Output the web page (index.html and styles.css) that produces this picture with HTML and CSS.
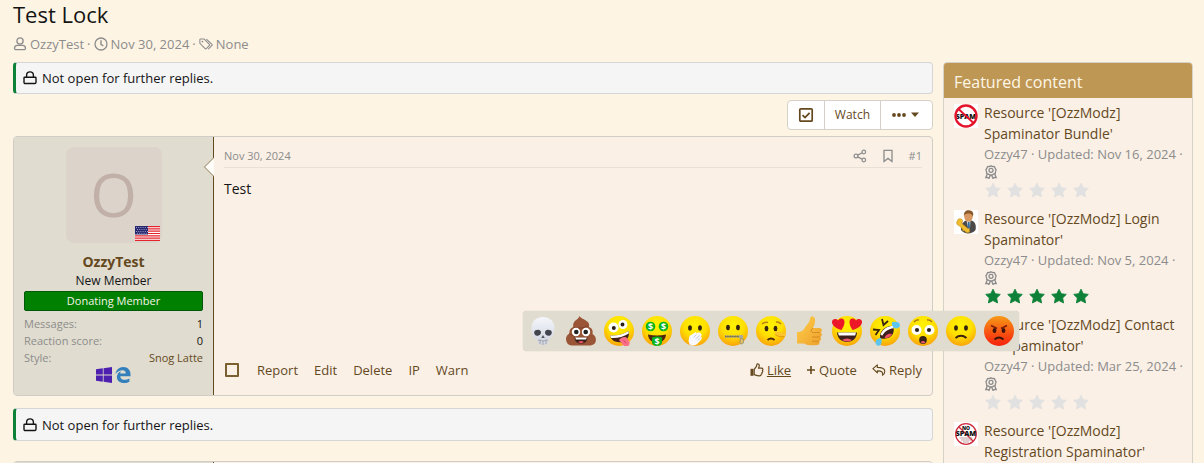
FILE: index.html
```
<!DOCTYPE html>
<html lang="en">
<head>
<meta charset="utf-8">
<meta name="viewport" content="width=device-width, initial-scale=1">
<title>Test Lock</title>
<link rel="stylesheet" href="styles.css">
</head>
<body>
<svg class="defs" aria-hidden="true">
  <defs>
    <radialGradient id="yellow" cx="50%" cy="30%" r="75%"><stop offset="0" stop-color="#fff200"/><stop offset=".5" stop-color="#ffe000"/><stop offset="1" stop-color="#f99a0c"/></radialGradient>
    <linearGradient id="red" x1="0" y1="0" x2="0" y2="1"><stop offset="0" stop-color="#f79a16"/><stop offset=".5" stop-color="#f85a12"/><stop offset="1" stop-color="#f5200c"/></linearGradient>
    <linearGradient id="thumb" x1="0" y1="0" x2="1" y2="1"><stop offset="0" stop-color="#ffcf4a"/><stop offset="1" stop-color="#eda02c"/></linearGradient>
    <linearGradient id="bone" x1="0" y1="0" x2="0" y2="1"><stop offset="0" stop-color="#f4f6fb"/><stop offset="1" stop-color="#cfd3dd"/></linearGradient>
    <symbol id="i-lock" viewBox="0 0 14 14"><path d="M1.7 6.2h10.6q.7 0 .7.7v4.4q0 1.2-1.2 1.2H2.2q-1.2 0-1.2-1.2V6.9q0-.7.7-.7zM3.6 6V4.3a3.4 3.4 0 0 1 6.8 0V6" fill="none" stroke="currentColor" stroke-width="1.4"/></symbol>
    <symbol id="i-user" viewBox="0 0 14 14"><circle cx="7" cy="4" r="3.1" fill="none" stroke="currentColor" stroke-width="1.3"/><path d="M4.5 8.4h5c2 0 3 1.4 3 3.1 0 .7-.4 1.1-1 1.1h-9c-.6 0-1-.4-1-1.1 0-1.700 1-3.100 3-3.100z" fill="none" stroke="currentColor" stroke-width="1.300"/></symbol>
    <symbol id="i-clock" viewBox="0 0 14 14"><circle cx="7" cy="7" r="6" fill="none" stroke="currentColor" stroke-width="1.300"/><path d="M7 3.300V7.300l2.300 1.500" fill="none" stroke="currentColor" stroke-width="1.400"/></symbol>
    <symbol id="i-tags" viewBox="0 0 16 14"><path d="M1 1.800v4.400l6 6q.7.7 1.400 0l3.500-3.500q.7-.7 0-1.400l-6-6H1.800q-.8 0-.8.5z" fill="none" stroke="currentColor" stroke-width="1.200"/><circle cx="3.900" cy="4.200" r="1" fill="currentColor"/><path d="M8.500 1.300l6.300 6.200q.6.6 0 1.200l-4.200 4.200" fill="none" stroke="currentColor" stroke-width="1.200"/></symbol>
    <symbol id="i-share" viewBox="0 0 14 14"><g fill="none" stroke="currentColor" stroke-width="1.200"><circle cx="10.800" cy="3" r="1.800"/><circle cx="3" cy="7" r="1.900"/><circle cx="10.800" cy="11" r="1.800"/><path d="M4.700 6.100l4.500-2.300M4.700 7.900l4.500 2.300"/></g></symbol>
    <symbol id="i-bookmark" viewBox="0 0 14 14"><path d="M3 1.300h8v11.200L7 9.400l-4 3.100z" fill="none" stroke="currentColor" stroke-width="1.300"/></symbol>
    <symbol id="i-check" viewBox="0 0 16 16"><rect x="1.800" y="1.800" width="12.400" height="12.400" rx="1" fill="none" stroke="currentColor" stroke-width="1.700"/><path d="M4.500 8.200l2.500 2.400 4.600-4.800" fill="none" stroke="currentColor" stroke-width="1.800"/></symbol>
    <symbol id="i-more" viewBox="0 0 28 14"><g fill="currentColor"><circle cx="3" cy="7" r="1.900"/><circle cx="8" cy="7" r="1.900"/><circle cx="13" cy="7" r="1.900"/><path d="M20 4.500h8L24 9z"/></g></symbol>
    <symbol id="i-like" viewBox="0 0 14 14"><path d="M4.200 6.300L6.400 3.400l.6-2.300c.2-.6 2.300-.3 2.300 1.500 0 1-.6 1.700-.7 2.600h3c1.500 0 1.600 1.700.8 2.300.6.800.3 1.700-.4 2 .3.900-.1 1.500-.7 1.700 0 1-.8 1.600-2 1.600-2.100 0-3.400-.6-5.100-1.200z" fill="none" stroke="currentColor" stroke-width="1.200"/><path d="M.5 5.800h3v7h-3z" fill="currentColor"/></symbol>
    <symbol id="i-plus" viewBox="0 0 10 14"><path d="M5 3v8M1 7h8" stroke="currentColor" stroke-width="1.600"/></symbol>
    <symbol id="i-reply" viewBox="0 0 15 14"><path d="M1 5.500l4.700-4v2.700c4.500 0 8 .8 8 4.300 0 1.700-1 3.200-2.500 4 .9-3-.5-4.500-5.500-4.600v2.200z" fill="none" stroke="currentColor" stroke-width="1.200" stroke-linejoin="round"/></symbol>
    <symbol id="i-award" viewBox="0 0 14 14"><g fill="none" stroke="currentColor"><path d="M7 .8l1.700.7 1.800.2.700 1.700.9 1.500-.6 1.700-.2 1.800-1.700.7L8 10H6l-1.600-.9-1.700-.7-.2-1.800-.6-1.700.9-1.500.7-1.700 1.800-.2z" stroke-width="1.300"/><circle cx="7" cy="5.300" r="2" stroke-width="1.300"/><path d="M3.300 8.800L1.800 12.600l2-.1 1.200 1L6.400 10M10.700 8.800l1.500 3.800-2-.1-1.200 1L7.600 10" stroke-width="1.300"/></g></symbol>
    <symbol id="i-star" viewBox="0 0 18 17"><path d="M9 .8l2.500 5.100 5.700.8-4.100 4 1 5.600L9 13.600l-5.100 2.700 1-5.600-4.100-4 5.700-.8z" fill="currentColor" stroke="currentColor" stroke-width="1" stroke-linejoin="round"/></symbol>
    <symbol id="stars" viewBox="0 0 106 17"><use href="#i-star" x="1" y="1" width="16" height="16"/><use href="#i-star" x="23" y="1" width="16" height="16"/><use href="#i-star" x="45" y="1" width="16" height="16"/><use href="#i-star" x="67" y="1" width="16" height="16"/><use href="#i-star" x="89" y="1" width="16" height="16"/></symbol>
  </defs>
</svg>

<div class="page">
  <header class="page-head">
    <h1 class="title">Test Lock</h1>
    <div class="byline">
      <svg class="icon"><use href="#i-user"/></svg><a href="#user">OzzyTest</a><span class="dot">·</span>
      <svg class="icon"><use href="#i-clock"/></svg><a href="#date">Nov 30, 2024</a><span class="dot">·</span>
      <svg class="icon"><use href="#i-tags"/></svg><span>None</span>
    </div>
  </header>

  <div class="columns">
    <main class="content">
      <div class="notice"><svg class="icon"><use href="#i-lock"/></svg>Not open for further replies.</div>

      <div class="toolbar">
        <div class="button-group">
          <button type="button" aria-label="Select for moderation"><svg class="icon icon-check"><use href="#i-check"/></svg></button>
          <button type="button">Watch</button>
          <button type="button" aria-label="More options"><svg class="icon icon-more"><use href="#i-more"/></svg></button>
        </div>
      </div>

      <article class="post">
        <section class="post-user">
          <div class="avatar">O
            <svg class="flag" viewBox="0 0 25 15" role="img" aria-label="United States">
              <rect width="25" height="15" fill="#fff"/>
              <path d="M0 .6h25M0 2.900h25M0 5.200h25M0 7.500h25M0 9.800h25M0 12.100h25M0 14.400h25" stroke="#e3242c" stroke-width="1.200"/>
              <rect width="13" height="8.500" fill="#27276f"/>
              <path d="M1 1.500h12M2 3.500h11M1 5.500h12M2 7.300h11" stroke="#b9b9dc" stroke-width=".8" stroke-dasharray="1 1.200"/>
            </svg>
          </div>
          <h2 class="user-name"><a href="#user">OzzyTest</a></h2>
          <p class="user-title">New Member</p>
          <p class="banner">Donating Member</p>
          <dl class="stats">
            <div><dt>Messages:</dt><dd>1</dd></div>
            <div><dt>Reaction score:</dt><dd>0</dd></div>
            <div><dt>Style:</dt><dd><a href="#style">Snog Latte</a></dd></div>
          </dl>
          <div class="platforms">
            <svg viewBox="0 0 16 16" role="img" aria-label="Windows"><path d="M0 2.300l6.800-1v6.300H0zM7.600 1.200L16 0v7.600H7.600zM0 8.400h6.800v6.300l-6.800-1zM7.600 8.400H16V16l-8.400-1.200z" fill="#4d20b0"/></svg>
            <svg viewBox="0 0 16 16" role="img" aria-label="Edge"><path d="M.6 7.100C1 3 4 0 8.300 0 13 0 15.500 3.300 15.500 7.300v1.900H5.300c.2 4.200 5.500 4.500 9.100 2.200v3.300C12 16 9.900 16.100 8 16c-4.200-.3-6.300-3.300-6.100-6.400.2-2.500 1.800-4.500 4-5.400-.5.800-.7 1.500-.7 2.200h5.500c0-2-.9-3.200-3.300-3.200C4.500 3.200 2.100 4.800.6 7.100z" fill="#3380bc"/></svg>
          </div>
        </section>
        <section class="post-main">
          <header class="post-head">
            <a href="#post">Nov 30, 2024</a>
            <div class="post-links">
              <a href="#share" aria-label="Share"><svg class="icon"><use href="#i-share"/></svg></a>
              <a href="#bookmark" aria-label="Bookmark"><svg class="icon"><use href="#i-bookmark"/></svg></a>
              <a href="#post-1">#1</a>
            </div>
          </header>
          <div class="post-body">Test</div>
          <footer class="post-foot">
            <div class="actions">
              <input type="checkbox" class="tick" aria-label="Select post">
              <a href="#report">Report</a>
              <a href="#edit">Edit</a>
              <a href="#delete">Delete</a>
              <a href="#ip">IP</a>
              <a href="#warn">Warn</a>
            </div>
            <div class="reply-actions">
              <div class="like">
                <a href="#like"><svg class="icon"><use href="#i-like"/></svg><u>Like</u></a>
                <div class="reactions">
                  <button type="button" aria-label="Skull"><svg viewBox="0 0 30 30"><path d="M15 1C7.500 1 3.500 6 3.500 12c0 3 .4 4.500 1.200 6 .7 1.500.5 3 2 3.700 2 .8 2.300 1 2.600 3 .3 2.800 2.700 4.300 5.700 4.300s5.400-1.500 5.700-4.300c.3-2 .6-2.200 2.600-3 1.500-.7 1.300-2.200 2-3.700.8-1.500 1.200-3 1.200-6C26.500 6 22.500 1 15 1z" fill="url(#bone)"/><path d="M7 14.500c3-1.500 5.800-1 6 1.700.1 2.300-1.900 3.800-4.100 3.500-2.700-.4-3.500-3.700-1.900-5.200zM23 14.500c-3-1.500-5.800-1-6 1.700-.1 2.300 1.900 3.800 4.100 3.500 2.700-.4 3.500-3.700 1.900-5.200z" fill="#42454e"/><path d="M15 19l-1.800 3h3.600z" fill="#555861"/><path d="M10 24q5 2 10 0M12 23.500V28M15 24.500V29M18 23.500V28" fill="none" stroke="#9a9ea9" stroke-width=".8"/></svg></button>
                  <button type="button" aria-label="Poop"><svg viewBox="0 0 30 30"><path d="M13 0c.5 2-1.500 3-3.500 4.500S6.500 9 7.500 11C4.500 12 3 14 3.500 17.500 1 19-.3 21 .1 24c.4 3.500 2.500 5 5.500 5.500h19c3.500-.5 5.100-2.500 5.300-5.200.2-3-1.400-5.300-3.400-6.300.8-4-1-6.300-3.500-7C24.500 4 17 4.500 13 0z" fill="#9a5436"/><path d="M7.500 11c4 2 11 1.500 14-1.500M3.500 17.500c3 3 7 3 9 2" fill="none" stroke="#7b3f29"/><circle cx="10" cy="16" r="4.200" fill="#fff"/><circle cx="20" cy="16" r="4.200" fill="#fff"/><circle cx="10.300" cy="16" r="2.300" fill="#222"/><circle cx="19.700" cy="16" r="2.300" fill="#222"/><path d="M8.500 21.500h13c-.3 4-3 6-6.500 6s-6.200-2-6.500-6z" fill="#38201b"/><path d="M9.300 21.500h11.400l-.6 2H9.900z" fill="#fff"/><path d="M12 26c1.500-1.500 4.500-1.500 6 0-1.500 1.500-4.500 1.500-6 0z" fill="#ee5266"/></svg></button>
                  <button type="button" aria-label="Zany"><svg viewBox="0 0 30 30"><circle cx="15" cy="15" r="15" fill="url(#yellow)"/><circle cx="9.500" cy="11.500" r="5" fill="#fff"/><circle cx="19" cy="8.500" r="4.500" fill="#fff"/><circle cx="9.800" cy="12" r="2" fill="#292015"/><circle cx="18.500" cy="8.500" r="1.900" fill="#292015"/><path d="M6 19.500c7 .5 13-1 18.500-4.500 1.500 5-1 9.500-6.500 11C12 27 7 24.500 6 19.500z" fill="#422116"/><path d="M6 19.500c7 .5 13-1 18.500-4.500l.3 2.500C19 21 13 22.500 7 22z" fill="#fff"/><path d="M15 24c2-2.500 5-3.500 7.500-2.500l3 4.500c1 4-3.500 6-6.500 3z" fill="#fb6f87"/><path d="M19.500 24l2.500 3.500" stroke="#d94669"/></svg></button>
                  <button type="button" aria-label="Money"><svg viewBox="0 0 30 30"><circle cx="15" cy="15" r="15" fill="url(#yellow)"/><circle cx="8.500" cy="10.500" r="4.800" fill="#06b51d"/><circle cx="21.500" cy="10.500" r="4.800" fill="#06b51d"/><path d="M6 18.500q9 2 18 0c-.4 5.500-4 8-9 8s-8.600-2.500-9-8z" fill="#51250e"/><path d="M10 21.500q5-2 10 0V27q-1 3-5 3t-5-3z" fill="#09b31e"/><g class="dollar"><text x="8.500" y="14">$</text><text x="21.500" y="14">$</text><text x="15" y="28.500">$</text></g></svg></button>
                  <button type="button" aria-label="Hand over mouth"><svg viewBox="0 0 30 30"><circle cx="15" cy="15" r="15" fill="url(#yellow)"/><ellipse cx="10" cy="12" rx="1.900" ry="2.800" fill="#35250e"/><ellipse cx="20" cy="12" rx="1.900" ry="2.800" fill="#35250e"/><path d="M8.500 25l1-5 5.500-3.500c1.500-.8 2 .4 1 1.200 2-1.300 4-1.500 4.800-.2 1 .5 1 2-.2 3.200 2 .3 1.500 2-.6 4.300l-3.500 3.500c-2 1.500-5 1.500-7-.5z" fill="#f8f9ff"/><path d="M13.500 21.500l3-3M15.500 23l4-3.500M17.500 24.500l3-2.500" stroke="#b8bdca" stroke-width=".8"/></svg></button>
                  <button type="button" aria-label="Zipped mouth"><svg viewBox="0 0 30 30"><circle cx="15" cy="15" r="15" fill="url(#yellow)"/><ellipse cx="10" cy="11.500" rx="1.900" ry="2.800" fill="#35250e"/><ellipse cx="20" cy="11.500" rx="1.900" ry="2.800" fill="#35250e"/><path d="M7 20.500h16" stroke="#9a978a" stroke-width="3" stroke-dasharray="1 .7"/><path d="M7 20.500h16" stroke="#696553" stroke-width=".7"/><rect x="21" y="19" width="4" height="3.500" rx="1" fill="#aaa99e"/><path d="M22.500 22.500l3 .5-.2 4q-1.500 2-3.300 0z" fill="#e4c45c" stroke="#9f9876"/></svg></button>
                  <button type="button" aria-label="Lying face"><svg viewBox="0 0 30 30"><circle cx="15" cy="15" r="15" fill="url(#yellow)"/><ellipse cx="10.500" cy="12.500" rx="1.900" ry="2.700" fill="#35250e"/><ellipse cx="19.500" cy="12.500" rx="1.900" ry="2.700" fill="#35250e"/><path d="M6 8q2.500-2.500 6-1.500M20 6q3-.5 5 2" fill="none" stroke="#b98213" stroke-width="1.500"/><path d="M19 15c3 .5 6 1.800 9.500 1.800 1.800.5 1.600 3.700-.5 3.700-4 .2-7-.5-9-2.500z" fill="#ffc62a"/><path d="M19 18.500c3 2.300 6 2.300 9.500 2" fill="none" stroke="#db900d" stroke-width=".8"/><path d="M11.500 24q3.500-3 7 0" fill="none" stroke="#4b2812" stroke-width="1.800"/></svg></button>
                  <button type="button" aria-label="Thumbs up"><svg viewBox="0 0 30 30"><path d="M3 16c4 0 6-1 8-4.500 2-3.500 4.500-4.500 5-8.500.3-3 3-3.500 4.300-1.500 1.700 3 .3 7-1.300 10.500h6.500c3 .3 3 4 .7 4.500 2.500.8 2 4-.2 4.500 1.800 1 1.200 3.700-.8 4.200 1 1.800-.2 3.500-2.200 3.800-5 .7-10 .5-13-1.500H3z" fill="url(#thumb)"/><path d="M19 12q-2 1.500-2 4M18 16.500h8M18 21h8M18 25.300h7" fill="none" stroke="#d98b24"/></svg></button>
                  <button type="button" aria-label="Heart eyes"><svg viewBox="0 0 30 30"><circle cx="15" cy="15" r="15" fill="url(#yellow)"/><path d="M9.500 14C4.500 12.500.5 10 0 6.500-.3 3 3.800 1.800 6 4.500 8 1.500 12.500 2 12.500 6c0 3-1.500 5.500-3 8z" fill="#ec1828"/><path d="M20.500 14c5-1.500 9-4 9.500-7.500.3-3.500-3.800-4.700-6-2C22 1.500 17.500 2 17.500 6c0 3 1.500 5.500 3 8z" fill="#ec1828"/><path d="M5 16.500h20c-.4 6-4.500 9.500-10 9.500S5.400 22.500 5 16.500z" fill="#3d201b"/><path d="M6 16.500h18l-.8 3H6.800z" fill="#fff"/><path d="M10 24q5-3 10 0-4 3-10 0z" fill="#f1566c"/></svg></button>
                  <button type="button" aria-label="Rolling laugh"><svg viewBox="0 0 30 30"><circle cx="15" cy="15" r="15" fill="url(#yellow)"/><path d="M3 13.500l6 .5-3.500 5M12 3l1.500 6L18 5" fill="none" stroke="#3b240d" stroke-width="1.800"/><path d="M10 21.500C9.500 15 15 10 23 9.800c2 5.500 0 10.500-5 12.200-4 1.200-7 .8-8-.5z" fill="#40201d"/><path d="M10.500 18.500C13 13 17 10.500 23 9.800l.7 2.500c-5 .7-9 3-11.500 7.500z" fill="#fff"/><path d="M14.500 22c1-3 4-5 7.500-4-1.500 3-4 4.300-7.500 4z" fill="#f15268"/><path d="M22 6c4-1 8 0 8 3s-4 4.500-6.500 2.500C22 10 21.500 8 22 6zM11 22c1.500 4 .5 7.500-2.500 7.700-3 .1-4-4-1.800-6C8 22.500 9.500 22 11 22z" fill="#5dc6f0"/></svg></button>
                  <button type="button" aria-label="Astonished"><svg viewBox="0 0 30 30"><circle cx="15" cy="15" r="15" fill="url(#yellow)"/><circle cx="8.500" cy="14" r="5" fill="#fff"/><circle cx="21.500" cy="14" r="5" fill="#fff"/><circle cx="9" cy="14" r="2.100" fill="#2b221b"/><circle cx="21" cy="14" r="2.100" fill="#2b221b"/><path d="M6 6q2-2.500 5-2M19 4q3-.5 5 2" fill="none" stroke="#a67515" stroke-width="1.300"/><ellipse cx="15" cy="24" rx="3.800" ry="4" fill="#342019"/><path d="M12.500 26.200q2.500-2.500 5 0-2.500 2.500-5 0z" fill="#e35b6a"/></svg></button>
                  <button type="button" aria-label="Frown"><svg viewBox="0 0 30 30"><circle cx="15" cy="15" r="15" fill="url(#yellow)"/><ellipse cx="10" cy="12" rx="1.900" ry="2.800" fill="#35250e"/><ellipse cx="20" cy="12" rx="1.900" ry="2.800" fill="#35250e"/><path d="M9.500 22q5.500-4.500 11 0" fill="none" stroke="#3b210e" stroke-width="1.900"/></svg></button>
                  <button type="button" aria-label="Angry"><svg viewBox="0 0 30 30"><circle cx="15" cy="15" r="15" fill="url(#red)"/><path d="M7 9.500l6 3M23 9.500l-6 3" stroke="#7d1b08" stroke-width="1.500"/><ellipse cx="10.500" cy="14.500" rx="1.900" ry="2.500" fill="#3c1409"/><ellipse cx="19.500" cy="14.500" rx="1.900" ry="2.500" fill="#3c1409"/><path d="M10.500 23.500q4.500-4 9 0" fill="none" stroke="#3c1409" stroke-width="1.800"/></svg></button>
                </div>
              </div>
              <a href="#quote"><svg class="icon icon-plus"><use href="#i-plus"/></svg>Quote</a>
              <a href="#reply"><svg class="icon"><use href="#i-reply"/></svg>Reply</a>
            </div>
          </footer>
        </section>
      </article>

      <div class="notice notice-end"><svg class="icon"><use href="#i-lock"/></svg>Not open for further replies.</div>

      <article class="post post-next"><section class="post-user"></section><section class="post-main"></section></article>
    </main>

    <aside class="sidebar">
      <h2 class="sidebar-head">Featured content</h2>
      <ul class="items">
        <li>
          <svg class="thumb" viewBox="0 0 24 24"><rect width="24" height="24" fill="#fff"/><text class="spam" x="12" y="15">SPAM</text><circle cx="12" cy="12" r="10.500" fill="none" stroke="#e3142c" stroke-width="2.400"/><path d="M4.500 5l15 14" stroke="#e3142c" stroke-width="2"/></svg>
          <div><a href="#r1">Resource '[OzzModz] Spaminator Bundle'</a><p>Ozzy47 · Updated: Nov 16, 2024 · <svg class="icon award"><use href="#i-award"/></svg></p><svg class="stars" role="img" aria-label="0 stars"><use href="#stars"/></svg></div>
        </li>
        <li>
          <svg class="thumb" viewBox="0 0 24 24"><rect width="24" height="24" fill="#fff"/><path d="M7 20c-.5-5 2-9 6-9.500h4c4 .5 5.500 5 4.500 9.500-3 4-11 5-14.500 0z" fill="#4b4a48"/><path d="M12.500 10.500h4L16 18l-1.500 2z" fill="#c9d8e5"/><path d="M14 12h1.500l.5 6-1.300 2-1-2z" fill="#336c9f"/><ellipse cx="14.500" cy="6.300" rx="4.300" ry="5.500" fill="#d89a62"/><path d="M10 6c-.5-4 2-6 5-5.800 4 .2 5 3.300 3.800 6.300-.8-2-2-3-4-3-2 .2-3.800 0-4.800 2.500z" fill="#8a5a2c"/><path d="M3.500 10c1.500-2 4.500-1.500 5 .5.300 1.300-.2 2-1 2.700l6 5 2 .5v3.500l-3 .5-2-2-1.500.3-.5-2-3.500-3.500c-2.500-.5-3-3-1.500-5z" fill="#f0bd2e" stroke="#bd861c" stroke-width=".6"/></svg>
          <div><a href="#r2">Resource '[OzzModz] Login Spaminator'</a><p>Ozzy47 · Updated: Nov 5, 2024 · <svg class="icon award"><use href="#i-award"/></svg></p><svg class="stars rated" role="img" aria-label="5 stars"><use href="#stars"/></svg></div>
        </li>
        <li>
          <svg class="thumb" viewBox="0 0 24 24"><rect width="24" height="24" fill="#fff"/></svg>
          <div><a href="#r3">Resource '[OzzModz] Contact Us Spaminator'</a><p>Ozzy47 · Updated: Mar 25, 2024 · <svg class="icon award"><use href="#i-award"/></svg></p><svg class="stars" role="img" aria-label="0 stars"><use href="#stars"/></svg></div>
        </li>
        <li>
          <svg class="thumb" viewBox="0 0 24 24"><rect width="24" height="24" fill="#fff"/><circle cx="12" cy="12" r="10.300" fill="none" stroke="#cf2b3d" stroke-width="1.300"/><path d="M4.800 4.800l14.400 14.400" stroke="#cf2b3d" stroke-width="1.300"/><text class="spam spam-small" x="12" y="7.500">NO</text><text class="spam" x="12" y="14">SPAM</text><path d="M5.500 16h13M7 18h10M9 20h6" stroke="#a77" stroke-width=".7"/></svg>
          <div><a href="#r4">Resource '[OzzModz] Registration Spaminator'</a></div>
        </li>
      </ul>
    </aside>
  </div>
</div>
</body>
</html>
```
FILE: styles.css
```
*, *::before, *::after { box-sizing: border-box; }

html { height: 100%; overflow: hidden; }

body {
  margin: 0;
  height: 100%;
  overflow: hidden;
  background: #fef4e4;
  color: #141414;
  font: 13px/18px "Open Sans", "Noto Sans", sans-serif;
}

h1, h2, p, dl, dd, ul { margin: 0; padding: 0; font-weight: 400; }
a { color: #65491e; text-decoration: none; }
button { font: inherit; color: inherit; cursor: pointer; }

.defs { position: absolute; width: 0; height: 0; }
.icon { width: 14px; height: 14px; flex: none; }

.page { padding: 0 11px 0 13px; }
.title { font-size: 22px; line-height: 28px; }

.byline {
  display: flex;
  align-items: center;
  gap: 3px;
  height: 18px;
  margin: 7px 0 9px;
  color: #8c8c8c;
}
.byline a { color: inherit; }

.columns { display: flex; align-items: flex-start; gap: 10px; }
.content { flex: 1; min-width: 0; }

.notice {
  display: flex;
  align-items: center;
  gap: 5px;
  padding: 6px 7px;
  border: 1px solid #d5d5d5;
  border-left: 3px solid #0d8138;
  border-radius: 4px;
  background: #f5f5f5;
}
.notice-end { margin: 12px 0 20px; padding: 7px 7px 6px; }

.toolbar { display: flex; justify-content: flex-end; margin: 6px 0; font-size: 12px; }
.button-group {
  display: flex;
  height: 30px;
  border: 1px solid #d5d0c8;
  border-radius: 4px;
  background: #fff;
  color: #65491e;
}
.button-group button {
  display: flex;
  align-items: center;
  padding: 0 10px;
  border: 0;
  background: none;
}
.button-group button + button { border-left: 1px solid #d5d0c8; }
.icon-check { width: 16px; height: 16px; }
.icon-more { width: 28px; margin-right: 3px; }

.post {
  display: flex;
  border: 1px solid #d0cdc7;
  border-radius: 4px;
  background: #faf0e6;
}
.post-user {
  width: 200px;
  padding: 10px 10px 12px;
  border-right: 1px solid #65491e;
  border-radius: 3px 0 0 3px;
  background: #e0dccf;
  text-align: center;
}
.avatar {
  position: relative;
  width: 96px;
  height: 96px;
  margin: 0 auto 9px;
  border-radius: 8px;
  background: #dcd3ca;
  color: #c0b0a8;
  font-size: 60px;
  line-height: 94px;
}
.flag { position: absolute; right: 2px; bottom: 2px; width: 25px; height: 15px; }
.user-name { font-size: 14px; line-height: 20px; }
.user-name a { font-weight: 700; }
.user-title { font-size: 12px; }
.banner {
  height: 20px;
  margin: 1px 0 4px;
  border: 1px solid #00590a;
  border-radius: 2px;
  background: #008000;
  color: #f5f5e8;
  font-size: 11px;
}
.stats { font-size: 11px; line-height: 17px; }
.stats div { display: flex; justify-content: space-between; }
.stats dt { color: #8c8c8c; }
.platforms { display: flex; justify-content: center; gap: 3px; margin-top: 1px; }
.platforms svg { width: 16px; height: 16px; }

.post-main {
  display: flex;
  flex: 1;
  flex-direction: column;
  position: relative;
  min-width: 0;
  padding: 10px;
}
.post-main::before {
  content: "";
  position: absolute;
  top: 20px;
  left: -10px;
  width: 10px;
  height: 20px;
  background: #8c7a55;
  clip-path: polygon(100% 0, 0 50%, 100% 100%);
}
.post-main::after {
  content: "";
  position: absolute;
  top: 21px;
  left: -9px;
  width: 9px;
  height: 18px;
  background: #fffdfa;
  clip-path: polygon(100% 0, 0 50%, 100% 100%);
}
.post-head {
  display: flex;
  justify-content: space-between;
  padding-bottom: 2px;
  border-bottom: 1px solid #e9e0d6;
  font-size: 11px;
}
.post-head a { color: #8c8c8c; }
.post-links { display: flex; align-items: center; gap: 14px; }
.post-links a { display: flex; }
.post-body { flex: 1; margin-top: 10px; font-size: 14px; line-height: 21px; }
.post-foot { display: flex; justify-content: space-between; align-items: center; margin-bottom: 6px; }
.actions { display: flex; align-items: center; gap: 16px; }
.tick {
  appearance: none;
  width: 14px;
  height: 14px;
  margin: 0 2px 0 1px;
  border: 2px solid #7a5f31;
  border-radius: 1px;
}
.reply-actions { display: flex; gap: 15px; }
.reply-actions a { display: flex; align-items: center; gap: 3px; }
.icon-plus { width: 10px; }

.like { position: relative; }
.reactions {
  position: absolute;
  z-index: 1;
  bottom: 28px;
  left: -227px;
  display: flex;
  gap: 8px;
  padding: 5px;
  border-radius: 4px;
  background: #e0dccf;
  box-shadow: 0 0 1px #bbb5a6;
}
.reactions button { width: 30px; height: 30px; padding: 0; border: 0; background: none; }
.reactions svg { display: block; width: 30px; height: 30px; }
.dollar { fill: #fff; font-size: 9px; font-weight: 700; text-anchor: middle; }

.post-next { height: 120px; }

.sidebar {
  width: 250px;
  border: 1px solid #d5d0c8;
  border-radius: 4px;
  background: #faf0e6;
}
.sidebar-head {
  padding: 8px 10px 5px;
  border-radius: 3px 3px 0 0;
  background: #bf9755;
  color: #fef6e6;
  font-size: 16px;
  line-height: 22px;
}
.items { padding: 0; list-style: none; }
.items li { display: flex; gap: 6px; padding: 4px 4px 6px 10px; }
.items div { flex: 1; min-width: 0; }
.items a { display: block; font-size: 14px; line-height: 21px; }
.items p { margin-top: 1px; color: #8c8c8c; }
.thumb { flex: none; width: 24px; height: 24px; margin-top: 2px; }
.award { display: block; margin: 2px 0; }
.stars { display: block; width: 106px; height: 17px; margin: 1px 0 0; color: #e1e1e1; }
.rated { color: #0d8138; }
.spam { fill: #111; font-size: 7px; font-weight: 800; text-anchor: middle; }
.spam-small { font-size: 5px; }
```
